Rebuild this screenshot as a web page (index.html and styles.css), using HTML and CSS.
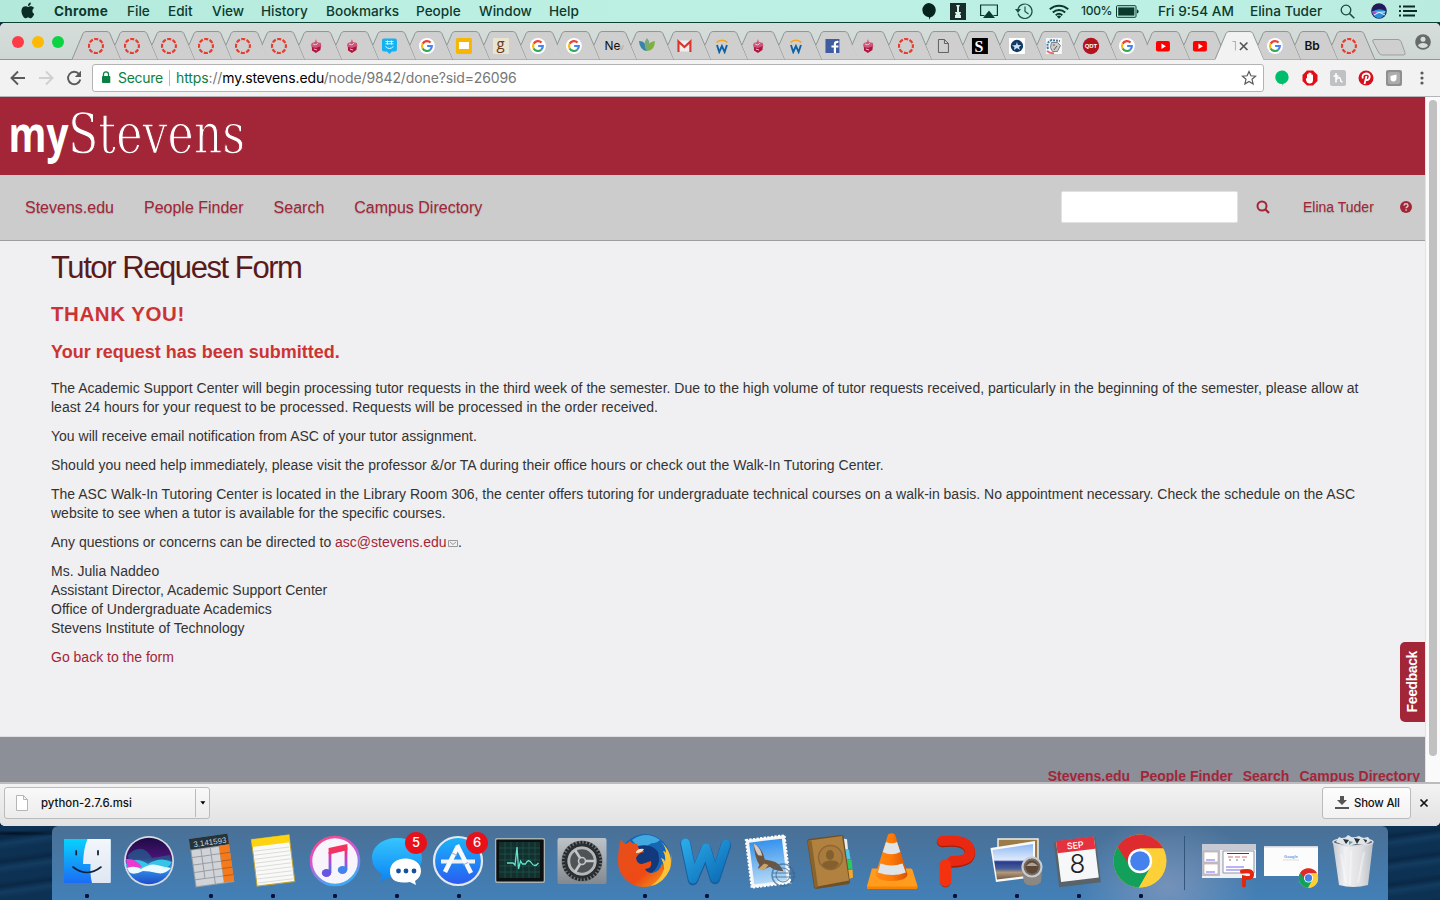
FILE: index.html
```html
<!DOCTYPE html>
<html lang="en">
<head>
<meta charset="utf-8">
<title>Tutor Request Form</title>
<link rel="stylesheet" href="styles.css">
</head>
<body>
<svg class="defs" width="0" height="0">
  <defs>
    <path id="tab" d="M6 14L11 2.5Q12 .5 14 .5H35Q37 .5 38 2.5L49 28.500H12Z" fill="#cfcfcf"/>
    <path id="tabline" d="M6 14L11 2.500Q12 .5 14 .5H35Q37 .5 38 2.500L49 28.500" fill="none" stroke="#8f9593"/>
    <symbol id="t" viewBox="0 0 49 29"><use href="#tab"/><use href="#tabline"/></symbol>
    <symbol id="canvas" viewBox="0 0 16 16"><circle cx="8" cy="8" r="7" fill="none" stroke="#e73c2e" stroke-width="2.200" stroke-dasharray="4.100 1.398" stroke-dashoffset="2"/></symbol>
    <symbol id="acorn" viewBox="0 0 16 16"><path d="M8 1l1 3 4 1 .5 3-4 2H4L3 7l1-2 3-1z" fill="#d0557a"/><path d="M4 9l4 1 5-2-.5 4L8 15l-4-2.500z" fill="#b01540"/><path d="M5 6l3 1 2-2M6 11l3 1" stroke="#eec3cf" fill="none"/></symbol>
    <symbol id="google" viewBox="0 0 16 16"><circle cx="8" cy="8" r="8" fill="#fff"/><g fill="none" stroke-width="2.200"><path d="M11.600 4.600A4.900 4.900 0 0 0 3.700 5.700" stroke="#ea4335"/><path d="M3.700 5.700a4.900 4.900 0 0 0 0 4.800" stroke="#fbbc05"/><path d="M3.700 10.500a4.900 4.900 0 0 0 7.600 1.200" stroke="#34a853"/><path d="M11.300 11.700A4.900 4.900 0 0 0 12.900 8H8.200" stroke="#4285f4"/></g></symbol>
    <symbol id="ww" viewBox="0 0 16 16"><path d="M2.500 4.500a6.500 5 0 0 1 11 0" fill="none" stroke="#f3a31c" stroke-width="1.500"/><path d="M3 7l2.300 7L8 8l2.700 6L13 7" fill="none" stroke="#0f62a5" stroke-width="1.900"/></symbol>
    <symbol id="yt" viewBox="0 0 16 16"><rect x="1" y="3" width="14" height="10.500" rx="2" fill="#f00"/><path d="M6.500 5.500v5.500L11 8.200z" fill="#fff"/></symbol>
    <symbol id="chrome" viewBox="0 0 54 54"><circle cx="27" cy="27" r="26.500" fill="#f9c92f"/><path d="M4.500 13A26.500 26.500 0 0 1 50.400 14.500H27L15 32z" fill="#de2b2f"/><path d="M4.500 13A26.500 26.500 0 0 0 26 53.500L37.500 34 17 32z" fill="#12a05a"/><path d="M50 14.500H27V27L37 34 26 53.500A26.500 26.500 0 0 0 50 14.500z" fill="#fcd036"/><circle cx="27" cy="27" r="12.200" fill="#fff"/><circle cx="27" cy="27" r="9.800" fill="#4581ee"/></symbol>
    <linearGradient id="finderL" x2="0" y2="1"><stop stop-color="#08d2fc"/><stop offset="1" stop-color="#1c6cf5"/></linearGradient>
    <linearGradient id="finderR" x2="0" y2="1"><stop stop-color="#f3f6fb"/><stop offset="1" stop-color="#dfe7f2"/></linearGradient>
    <linearGradient id="siri" x2="0" y2="1"><stop stop-color="#1d0b45"/><stop offset=".45" stop-color="#4b1478"/><stop offset=".6" stop-color="#3a9ae8"/><stop offset="1" stop-color="#1b4ecb"/></linearGradient>
    <linearGradient id="sky" x2="0" y2="1"><stop stop-color="#3190ee"/><stop offset="1" stop-color="#b9dcf5"/></linearGradient>
    <linearGradient id="store" x2="0" y2="1"><stop stop-color="#19b4f9"/><stop offset="1" stop-color="#2a5bf0"/></linearGradient>
    <linearGradient id="msg" x2="0" y2="1"><stop stop-color="#36c5fd"/><stop offset="1" stop-color="#0a83f5"/></linearGradient>
    <linearGradient id="tune" x2=".4" y2="1"><stop stop-color="#fb4a7a"/><stop offset=".5" stop-color="#d455d8"/><stop offset="1" stop-color="#3fa9f5"/></linearGradient>
    <linearGradient id="note" x2="0" y2="1"><stop stop-color="#f82f63"/><stop offset=".5" stop-color="#b249d8"/><stop offset="1" stop-color="#2f7df0"/></linearGradient>
    <linearGradient id="metal" x2="0" y2="1"><stop stop-color="#bcc4ca"/><stop offset="1" stop-color="#84898f"/></linearGradient>
    <linearGradient id="fox" x2="1" y2="1"><stop stop-color="#e5501c"/><stop offset=".6" stop-color="#ee4a15"/><stop offset="1" stop-color="#f9b01c"/></linearGradient>
    <linearGradient id="cone" x2="1" y2="0"><stop stop-color="#ff8a14"/><stop offset=".5" stop-color="#ff7a05"/><stop offset="1" stop-color="#d75203"/></linearGradient>
    <linearGradient id="word" x2="1" y2="1"><stop stop-color="#2aa7e6"/><stop offset="1" stop-color="#0c6bb5"/></linearGradient>
    <linearGradient id="trash" x2="1" y2="0"><stop stop-color="#c5c9cf"/><stop offset=".3" stop-color="#f1f1f3"/><stop offset=".7" stop-color="#dfdfe2"/><stop offset="1" stop-color="#b9bec5"/></linearGradient>
    <linearGradient id="sea" x2="0" y2="1"><stop stop-color="#8fb8f5"/><stop offset=".45" stop-color="#dfeafa"/><stop offset=".5" stop-color="#27398c"/><stop offset=".7" stop-color="#49619b"/><stop offset=".8" stop-color="#b49878"/><stop offset="1" stop-color="#705b48"/></linearGradient>
  </defs>
</svg>

<header class="menubar">
  <nav class="menus">
    <svg class="apple" viewBox="0 0 14 17"><path d="M9.800.5C8 .7 6.800 2.200 7 4 8.700 4 10 2.400 9.800.5zM13.200 6.100C12 4.500 9.800 4 8.300 4.600c-.9.400-1.500.4-2.400 0C4 3.900 2 4.500 1 6.400c-1.300 2.600-.2 6.500 1.700 8.800 1 1.200 1.900 1.200 3 .7.900-.4 1.900-.4 2.800 0 1.200.5 2 .3 3-.9.900-1.100 1.400-2.200 1.700-3.100-2.300-1-2.500-4.300 0-5.800z" fill="#0b2c24"/></svg>
    <b>Chrome</b><span>File</span><span>Edit</span><span>View</span><span>History</span><span>Bookmarks</span><span>People</span><span>Window</span><span>Help</span>
  </nav>
  <div class="status">
    <svg width="15" height="17" viewBox="0 0 15 17"><path d="M7.500 0a7.300 7.300 0 0 1 2 14.300L8 16.800v-2.500A7.200 7.200 0 0 1 7.500 0z" fill="#06231c"/></svg>
    <svg width="16" height="17" viewBox="0 0 16 17"><path d="M0 0h16v17H0z" fill="#182c2a"/><path d="M6 2h4l-1 2v5h2l-1 3h1v3H5v-3h1L5 9h2V4z" fill="#d6f2e9"/></svg>
    <svg width="18" height="15" viewBox="0 0 18 15"><path d="M4.500 11.500H.6V1h16.800v10.500h-3.900" fill="none" stroke="#0b3a2d" stroke-width="1.200"/><path d="M9 6.500l6 7.500H3z" fill="#0b3a2d"/></svg>
    <svg width="18" height="17" viewBox="0 0 18 17"><path d="M3 10.500a7.200 7.200 0 1 0 0-4.500M10 3.500v5l3.500 2.500" fill="none" stroke="#1b5144" stroke-width="1.200"/><path d="M0 6h6L3 10z" fill="#1b5144"/></svg>
    <svg width="20" height="15" viewBox="0 0 20 15"><g fill="none" stroke="#0b3a2d" stroke-width="1.900"><path d="M.8 5.300a13.500 13.500 0 0 1 18.400 0M3.800 8.500a9 9 0 0 1 12.400 0M6.700 11.300a5 5 0 0 1 6.600 0"/></g><path d="M10 14.800l2.200-2.400a3.300 3.300 0 0 0-4.400 0z" fill="#0b3a2d"/></svg>
    <span class="pct">100%</span>
    <svg width="23" height="13" viewBox="0 0 23 13"><rect x=".5" y=".7" width="19.500" height="11.600" rx="1" fill="none" stroke="#0b3a2d"/><path d="M2.200 2.400H18.400v8.200H2.200z" fill="#0b3a2d"/><path d="M21 4.500q1.600 0 1.600 2t-1.600 2z" fill="#0b3a2d"/></svg>
    <span class="clock">Fri 9:54 AM</span>
    <span class="user">Elina Tuder</span>
    <svg width="15" height="15" viewBox="0 0 15 15"><circle cx="6" cy="6" r="4.800" fill="none" stroke="#164b3e" stroke-width="1.300"/><path d="M9.500 9.500l4.800 4.800" stroke="#164b3e" stroke-width="1.600"/></svg>
    <svg width="16" height="16" viewBox="0 0 16 16"><circle cx="8" cy="8" r="7.800" fill="#231a5a"/><path d="M1 9q6-5 14-1-2 7-7 7.500Q2 14 1 9z" fill="#2890d8"/><path d="M2 9q6-1 12 3M3 12q5-4 11-3" stroke="#d8f5ff" fill="none"/><path d="M1 8l6 1-5 2z" fill="#b13fd8"/></svg>
    <svg width="18" height="12" viewBox="0 0 18 12"><path d="M4 1.500h12M4 6h14M4 10.500h12" stroke="#0b2c24" stroke-width="2"/><path d="M0 1.500h2M0 6h2M0 10.500h2" stroke="#0b2c24" stroke-width="2"/></svg>
  </div>
</header>

<main class="window">
  <div class="tabstrip">
    <div class="lights"><i class="red"></i><i class="yellow"></i><i class="green"></i></div>
    <div class="tabs">
      <svg viewBox="0 0 49 29"><path d="M0 28.500L11 2.500Q12 .5 14 .5H35Q37 .5 38 2.500L49 28.500" fill="#cfcfcf" stroke="#8f9593"/><use href="#canvas" x="16" y="7" width="16" height="16"/></svg>
      <svg viewBox="0 0 49 29"><use href="#t"/><use href="#canvas" x="15" y="7" width="16" height="16"/></svg>
      <svg viewBox="0 0 49 29"><use href="#t"/><use href="#canvas" x="15" y="7" width="16" height="16"/></svg>
      <svg viewBox="0 0 49 29"><use href="#t"/><use href="#canvas" x="15" y="7" width="16" height="16"/></svg>
      <svg viewBox="0 0 49 29"><use href="#t"/><use href="#canvas" x="15" y="7" width="16" height="16"/></svg>
      <svg viewBox="0 0 49 29"><use href="#t"/><use href="#canvas" x="15" y="7" width="16" height="16"/></svg>
      <svg viewBox="0 0 49 29"><use href="#t"/><use href="#acorn" x="15" y="7" width="16" height="16"/></svg>
      <svg viewBox="0 0 49 29"><use href="#t"/><use href="#acorn" x="14" y="7" width="16" height="16"/></svg>
      <svg viewBox="0 0 49 29"><use href="#t"/><path d="M17 7.500h11q2 0 2 2v9q0 2-2 2h-3L22.500 23 20 20.500h-3q-2 0-2-2v-9q0-2 2-2z" fill="#15b1f1"/><path d="M18.500 15.500q4 4 8 0M20.500 9.500v4M24.500 9.500v4M18.500 10.500h8M18.500 12.800h8" fill="none" stroke="#fff" stroke-width=".9"/></svg>
      <svg viewBox="0 0 49 29"><use href="#t"/><use href="#google" x="15" y="7" width="16" height="16"/></svg>
      <svg viewBox="0 0 49 29"><use href="#t"/><rect x="15" y="7" width="16" height="16" rx="1.500" fill="#f6b704"/><path d="M18 11h10v7H18z" fill="#fff"/></svg>
      <svg viewBox="0 0 49 29"><use href="#t"/><path d="M15 7h16v16H15z" fill="#eae5d0"/><text x="18.600" y="18.500" class="goodreads">g</text></svg>
      <svg viewBox="0 0 49 29"><use href="#t"/><use href="#google" x="15" y="7" width="16" height="16"/></svg>
      <svg viewBox="0 0 49 29"><use href="#t"/><use href="#google" x="15" y="7" width="16" height="16"/></svg>
      <svg viewBox="0 0 49 29"><use href="#t"/><text x="16.500" y="19" class="tabtext">Ne</text><text x="31" y="19" class="tabtext faded">v</text></svg>
      <svg viewBox="0 0 49 29"><use href="#t"/><path d="M14 10q8 0 8 10-7 0-8-10z" fill="#3684a8"/><path d="M22 7q5 5 0 13-5-7 0-13z" fill="#7ba87c"/><path d="M30 10q0 10-8 10 0-9 8-10z" fill="#7eb13d"/></svg>
      <svg viewBox="0 0 49 29"><use href="#t"/><path d="M15.500 9.500h14v11h-14z" fill="#eee"/><path d="M16.500 21V10.500l6 5.500 6-5.500V21" fill="none" stroke="#d7372c" stroke-width="2.200"/></svg>
      <svg viewBox="0 0 49 29"><use href="#t"/><use href="#ww" x="15" y="7" width="16" height="16"/></svg>
      <svg viewBox="0 0 49 29"><use href="#t"/><use href="#acorn" x="14" y="7" width="16" height="16"/></svg>
      <svg viewBox="0 0 49 29"><use href="#t"/><use href="#ww" x="15" y="7" width="16" height="16"/></svg>
      <svg viewBox="0 0 49 29"><use href="#t"/><path d="M15.500 8h14v14h-14z" fill="#3f5c9f"/><path d="M25 22v-9q0-2.500 3.500-2M21.500 15.500h7" fill="none" stroke="#fff" stroke-width="2.200"/></svg>
      <svg viewBox="0 0 49 29"><use href="#t"/><use href="#acorn" x="14" y="7" width="16" height="16"/></svg>
      <svg viewBox="0 0 49 29"><use href="#t"/><use href="#canvas" x="15" y="7" width="16" height="16"/></svg>
      <svg viewBox="0 0 49 29"><use href="#t"/><path d="M18.500 8.500h6l4 4v9h-10zM24.500 8.500v4h4" fill="none" stroke="#5f5f5f"/></svg>
      <svg viewBox="0 0 49 29"><use href="#t"/><path d="M15 7h16v16H15z" fill="#000"/><text x="17.500" y="20.800" class="slate">S</text></svg>
      <svg viewBox="0 0 49 29"><use href="#t"/><path d="M15 7h16v16H15z" fill="#fff"/><circle cx="23" cy="15" r="6.200" fill="#123a66"/><path d="M23 11l1 3h3.500L25 16l1 3-3-2-3 2 .5-3-2.500-1.500 4-.5z" fill="#cfe0f0"/></svg>
      <svg viewBox="0 0 49 29"><use href="#t"/><path d="M15 7h16v16H15z" fill="#f6f6f6"/><path d="M17 18q-2-7 4-9l8 1" stroke="#3a7fb0" fill="none" stroke-width="2" stroke-dasharray="2 1"/><path d="M20.500 11.500h6l3 3-3 6h-5l-2-4z" fill="#ccc" stroke="#666" stroke-width=".8"/><path d="M22 14h2M26 15l-3 4" stroke="#444" stroke-width=".8"/><path d="M16 20q4 3 7 2" stroke="#e86a6a" stroke-width="2" fill="none"/></svg>
      <svg viewBox="0 0 49 29"><use href="#t"/><circle cx="23" cy="15" r="8.200" fill="#b3131f"/><text x="23" y="17.500" class="qdt">QDT</text></svg>
      <svg viewBox="0 0 49 29"><use href="#t"/><use href="#google" x="14" y="7" width="16" height="16"/></svg>
      <svg viewBox="0 0 49 29"><use href="#t"/><use href="#yt" x="14" y="7" width="16" height="16"/></svg>
      <svg viewBox="0 0 49 29"><use href="#t"/><use href="#yt" x="14" y="7" width="16" height="16"/></svg>
      <svg viewBox="0 0 49 29"><path d="M0 29V28.500L11 2.500Q12 .5 14 .5H35Q37 .5 38 2.500L49 28.500V29" fill="#f2f2f2"/><path d="M0 28.500L11 2.500Q12 .5 14 .5H35Q37 .5 38 2.500L49 28.500" fill="none" stroke="#8f9593"/><path d="M17.500 10.500h3.500M20.500 10.500v9" stroke="#b9aea3" fill="none"/><path d="M25 11.500l7.500 7.500M32.500 11.500L25 19" stroke="#555" stroke-width="1.700"/></svg>
      <svg viewBox="0 0 49 29"><use href="#t"/><use href="#google" x="15" y="7" width="16" height="16"/></svg>
      <svg viewBox="0 0 49 29"><use href="#t"/><text x="15.500" y="19" class="tabtext bold">Bb</text></svg>
      <svg viewBox="0 0 49 29"><use href="#t"/><use href="#canvas" x="15" y="7" width="16" height="16"/></svg>
    </div>
    <svg class="newtab" width="34" height="17" viewBox="0 0 34 17"><path d="M2 .5h24q2 0 3 2l4 11q.8 2.500-1.500 2.500H10q-2 0-3-2L1 3Q.2.5 2 .5z" fill="#cfcfcf" stroke="#9a9f9d"/></svg>
    <svg class="person" width="16" height="16" viewBox="0 0 16 16"><circle cx="8" cy="8" r="7.800" fill="#666a69"/><circle cx="8" cy="5.300" r="2.500" fill="#d6dddb"/><path d="M3 11.800q1-2.800 5-2.800t5 2.800q-2 2.200-5 2.200t-5-2.200z" fill="#d6dddb"/></svg>
  </div>

  <div class="toolbar">
    <div class="navs">
      <svg width="16" height="16" viewBox="0 0 16 16"><path d="M15 8H2M8 1.500L1.500 8 8 14.500" fill="none" stroke="#5a5a5a" stroke-width="1.900"/></svg>
      <svg width="16" height="16" viewBox="0 0 16 16"><path d="M1 8h13M8 1.500L14.500 8 8 14.500" fill="none" stroke="#d0d0d0" stroke-width="1.900"/></svg>
      <svg width="16" height="16" viewBox="0 0 16 16"><path d="M13 4A6.200 6.200 0 1 0 14.300 9.500" fill="none" stroke="#5a5a5a" stroke-width="1.900"/><path d="M15 .8V7H8.800z" fill="#5a5a5a"/></svg>
    </div>
    <div class="omnibox">
      <svg width="10" height="13" viewBox="0 0 10 13"><path d="M2.500 5.500V3.300a2.500 2.500 0 0 1 5 0v2.200" fill="none" stroke="#0b8043" stroke-width="1.300"/><rect x="1" y="5" width="8.300" height="7" rx=".8" fill="#0b8043"/></svg>
      <span class="secure">Secure</span><i class="bar"></i>
      <span class="url"><em>https</em>://<strong>my.stevens.edu</strong>/node/9842/done?sid=26096</span>
      <svg class="star" width="16" height="16" viewBox="0 0 16 16"><path d="M8 1.500l1.900 4.300 4.700.4-3.600 3.100 1.100 4.600L8 11.400l-4.100 2.500L5 9.300 1.400 6.200l4.700-.4z" fill="none" stroke="#5a5a5a" stroke-width="1.200"/></svg>
    </div>
    <div class="exts">
      <svg width="16" height="16" viewBox="0 0 16 16"><path d="M7.500.5a6.700 6.700 0 0 1 2 13.200L8.500 16V14A6.700 6.700 0 0 1 7.500.5z" fill="#00bd6c"/></svg>
      <svg width="16" height="16" viewBox="0 0 16 16"><path d="M5 .5h6L15.500 5v6L11 15.500H5L.5 11V5z" fill="#e40d16"/><path d="M5 8V4.500q.8-1 1.400 0V3q.9-1 1.600 0 .9-.8 1.500.5V5q.8-1 1.500 0v5q0 3.500-3.300 3.500T3.800 9q.5-1 1.200-1z" fill="#fff"/></svg>
      <svg width="16" height="16" viewBox="0 0 16 16"><rect width="16" height="16" rx="2.500" fill="#bfc1c3"/><path d="M6 3v9.500M6 9.500q4-4 4.500 0 .2 3 2 2M3.500 6h5" fill="none" stroke="#fff" stroke-width="1.500"/></svg>
      <svg width="16" height="16" viewBox="0 0 16 16"><circle cx="8" cy="8" r="7.500" fill="#d5101c"/><path d="M4.800 8.500Q3.600 4 8 3.500q4 .2 3.700 3.500-.7 3.500-3.500 3L7 9.500M8.500 6l-2 8" fill="none" stroke="#fff" stroke-width="1.800"/></svg>
      <svg width="16" height="16" viewBox="0 0 16 16"><rect width="16" height="16" rx="2" fill="#8f8f8f"/><rect x="2" y="2" width="12" height="12" rx="2" fill="#acacac"/><path d="M4.500 6l6-1.500v4q-.5 3-3 3-3 0-3-3z" fill="#fff"/></svg>
      <svg width="16" height="16" viewBox="0 0 16 16"><g fill="#5a5a5a"><circle cx="8" cy="3" r="1.600"/><circle cx="8" cy="8" r="1.600"/><circle cx="8" cy="13" r="1.600"/></g></svg>
    </div>
  </div>

  <div class="viewport">
    <div class="page">
      <div class="banner">
        <svg width="260" height="78" viewBox="0 0 260 78"><text x="8.500" y="55" class="my" textLength="60" lengthAdjust="spacingAndGlyphs">my</text><text x="68" y="55.500" class="stevens" textLength="177" lengthAdjust="spacingAndGlyphs">Stevens</text></svg>
      </div>
      <nav class="sitenav">
        <a>Stevens.edu</a><a>People Finder</a><a>Search</a><a>Campus Directory</a>
        <div class="right">
          <input class="search" type="text" aria-label="Search">
          <svg width="14" height="14" viewBox="0 0 14 14"><circle cx="6" cy="6" r="4.500" fill="none" stroke="#a32638" stroke-width="2"/><path d="M9 9l4 4" stroke="#a32638" stroke-width="2.300"/></svg>
          <a class="me">Elina Tuder</a>
          <svg class="help" width="12" height="12" viewBox="0 0 12 12"><circle cx="6" cy="6" r="6" fill="#a32638"/><path d="M4 4.600Q4.200 2.800 6 2.800T8 4.500Q8 5.400 7 6 6.100 6.500 6.100 7.300M6.100 8.300v1.400" fill="none" stroke="#d9c4c8" stroke-width="1.500"/></svg>
        </div>
      </nav>
      <article class="content">
        <h1>Tutor Request Form</h1>
        <h2>THANK YOU!</h2>
        <h3>Your request has been submitted.</h3>
        <p>The Academic Support Center will begin processing tutor requests in the third week of the semester. Due to the high volume of tutor requests received, particularly in the beginning of the semester, please allow at<br>least 24 hours for your request to be processed. Requests will be processed in the order received.</p>
        <p>You will receive email notification from ASC of your tutor assignment.</p>
        <p>Should you need help immediately, please visit the professor &amp;/or TA during their office hours or check out the Walk-In Tutoring Center.</p>
        <p>The ASC Walk-In Tutoring Center is located in the Library Room 306, the center offers tutoring for undergraduate technical courses on a walk-in basis. No appointment necessary. Check the schedule on the ASC<br>website to see when a tutor is available for the specific courses.</p>
        <p>Any questions or concerns can be directed to <a>asc@stevens.edu<svg class="mail" width="10" height="7" viewBox="0 0 10 7"><path d="M.5.5h9v6h-9zM2 2l3 2.500L8 2" fill="none" stroke="#999"/></svg></a>.</p>
        <p>Ms. Julia Naddeo<br>Assistant Director, Academic Support Center<br>Office of Undergraduate Academics<br>Stevens Institute of Technology</p>
        <p><a>Go back to the form</a></p>
      </article>
      <footer class="sitefoot"><a>Stevens.edu</a><a>People Finder</a><a>Search</a><a>Campus Directory</a></footer>
      <div class="feedback"><span>Feedback</span></div>
    </div>
    <div class="scroll"><i></i></div>
  </div>

  <div class="shelf">
    <div class="download">
      <svg width="12" height="16" viewBox="0 0 12 16"><path d="M.5.5h7l4 4v11H.5zM7.500.5v4h4" fill="#fff" stroke="#b5b5b5"/></svg>
      <span>python-2.7.6.msi</span>
      <b><svg width="6" height="4" viewBox="0 0 6 4"><path d="M.3.300h5L3 3.500z" fill="#000"/></svg></b>
    </div>
    <div class="showall"><svg width="14" height="13" viewBox="0 0 14 13"><path d="M5 0h4v4h3L7 9 2 4h3z" fill="#555"/><path d="M0 12h14" stroke="#555" stroke-width="2"/></svg><span>Show All</span></div>
    <svg class="close" width="10" height="10" viewBox="0 0 10 10"><path d="M1.500 1.500l7 7M8.500 1.500l-7 7" stroke="#111" stroke-width="1.700"/></svg>
  </div>
</main>

<section class="desktop">
  <div class="dock">
    <svg class="run" viewBox="56 826 62 74"><path d="M64 839.500q0-.5.500-.5h46v44H64.500q-.5 0-.5-.5z" fill="url(#finderL)"/><path d="M87.500 839h22.500q.8 0 .8 1v42q0 1-.8 1H92q-2-7-1.500-19H83q.5-16 4.500-25z" fill="url(#finderR)"/><path d="M73 867q14 11 28 0" fill="none" stroke="#12223c" stroke-width="1.600" stroke-linecap="round"/><path d="M76.200 851v3.500M98 851v3.500" stroke="#12223c" stroke-width="1.800" stroke-linecap="round"/></svg>
    <svg viewBox="118 826 62 74"><circle cx="149" cy="861" r="25" fill="#d9dce3"/><circle cx="149" cy="861" r="23.300" fill="url(#siri)"/><path d="M128 855q14-14 24 3l18-3q2 8 0 12l-40 4z" fill="#1d6f96" opacity=".6"/><path d="M126 864q10-8 22 0 12-8 24-2-3 6-10 7-7-3-14 0t-20 0z" fill="#35c5e8"/><path d="M126 859q10-1 16 8l-14 3z" fill="#e93bd0"/><path d="M127 868q8-3 14 1 9-6 16-4t14 3q-6 7-14 5t-14-2q-10 5-14 1z" fill="#e9fbff"/></svg>
    <svg class="run" viewBox="180 826 62 74"><g transform="rotate(-8 211 860)"><path d="M192 836h39v49h-39z" fill="#9a9da2"/><path d="M192 836h39v11h-39z" fill="#24333c"/><text x="229" y="845" class="calc">3.141593</text><path d="M221 847h10v37h-10z" fill="#f47a1b"/><g fill="#d0d3d7"><path d="M193 848h9v6.500h-9zM203 848h8.500v6.500H203zM212.500 848h8v6.500h-8zM193 855.500h9v6.500h-9zM203 855.500h8.500v6.500H203zM212.500 855.500h8v6.500h-8zM193 863h9v6.500h-9zM203 863h8.500v6.500H203zM212.500 863h8v6.500h-8zM193 870.500h9v6.500h-9zM203 870.500h8.500v6.500H203zM212.500 870.500h8v6.500h-8zM193 878h18.500v6H193zM212.500 878h8v6h-8z"/></g><path d="M221 855h10M221 862.500h10M221 870h10M221 877.500h10" stroke="#a65b25" stroke-width=".8"/></g></svg>
    <svg class="run" viewBox="242 826 62 74"><g transform="rotate(-7 273 860)"><path d="M254 837h38v47h-38z" fill="#f9f9f7" stroke="#bda434" stroke-width="1"/><path d="M254 837h38v7.500h-38z" fill="#fdd40f"/><path d="M255 849h36M255 853h36M255 857h36M255 861h36M255 865h36M255 869h36M255 873h36M255 877h36M255 881h36" stroke="#dcdcdc"/></g></svg>
    <svg class="run" viewBox="304 826 62 74"><circle cx="335" cy="861" r="24" fill="#f7f5fb" stroke="url(#tune)" stroke-width="2.600"/><path d="M330 873v-20l16-4v21" fill="none" stroke="url(#note)" stroke-width="2.800"/><path d="M328.600 848l18.800-4v6l-18.800 4z" fill="#f5325f"/><ellipse cx="326.500" cy="873" rx="4.700" ry="4" fill="#6a55e0"/><ellipse cx="342.500" cy="870" rx="4.700" ry="4" fill="#4482ec"/></svg>
    <svg class="run" viewBox="366 826 62 74"><path d="M397 838c14 0 25 8 25 20s-11 20-25 20q-5 0-9-1-5 5-8 5 3-4 2-8-10-6-10-16c0-12 11-20 25-20z" fill="url(#msg)"/><path d="M405.500 858.500c9 0 15.500 5 15.500 12.500q0 6-6 10l1 4-6-3q-20 3-20-11c0-7.500 6.500-12.500 15.500-12.500z" fill="#fff"/><g fill="#14509c"><circle cx="398.500" cy="871" r="2.400"/><circle cx="406" cy="871" r="2.400"/><circle cx="414" cy="871" r="2.400"/></g><circle cx="416" cy="843" r="11" fill="#e91119"/><text x="416" y="847" class="badge">5</text></svg>
    <svg class="run" viewBox="428 826 62 74"><circle cx="458" cy="861" r="24" fill="url(#store)" stroke="#e5e9ef" stroke-width="2.200"/><path d="M441 861.500h34" stroke="#eef1f5" stroke-width="4"/><path d="M457 845l14 28M457 848l-12 24" stroke="#f8f9fb" stroke-width="4.500"/><path d="M452 853l5 2.500M463 865l5-2.500" stroke="#93a9c8"/><circle cx="477" cy="843" r="11" fill="#e91119"/><text x="477" y="847" class="badge">6</text></svg>
    <svg viewBox="490 826 62 74"><rect x="495" y="838" width="50" height="45" rx="2" fill="#a8b3b3"/><rect x="496.300" y="839.500" width="47.400" height="42" rx="1" fill="#0d1010"/><path d="M499 842h41v36h-41z" fill="#12302d"/><path d="M499 848h41M499 854h41M499 860h41M499 866h41M499 872h41M505 842v36M511 842v36M517 842v36M523 842v36M529 842v36M535 842v36" stroke="#23524d" stroke-width=".8"/><path d="M507 863h6l2 2 2-18 1.500 22 2-8 2 3h3q3-6 6-1t7 0" fill="none" stroke="#63e3cb" stroke-width="1.300"/></svg>
    <svg viewBox="552 826 62 74"><rect x="557.500" y="838" width="49" height="46" rx="2" fill="url(#metal)"/><circle cx="582" cy="861" r="20.500" fill="#6f7376"/><circle cx="582" cy="861" r="18.500" fill="none" stroke="#222527" stroke-width="3" stroke-dasharray="1.900 1.500"/><circle cx="582" cy="861" r="16" fill="none" stroke="#2b2e30" stroke-width="3"/><circle cx="582" cy="861" r="13.200" fill="#4f5356" stroke="#b4b8bb" stroke-width="2.800"/><path d="M582 861l13 0M582 861l-7-11M582 861l-7 11" stroke="#c3c6c9" stroke-width="2.600"/><circle cx="582" cy="861" r="3.500" fill="#55595c" stroke="#c3c6c9" stroke-width="1.600"/></svg>
    <svg class="run" viewBox="614 826 62 74"><circle cx="645" cy="859.500" r="25.500" fill="#1766b4"/><path d="M632 840q14-10 28 0-4 4-8 3-8 6-16 2z" fill="#3fa9e0"/><path d="M638 846q14-3 20 6 4 14-8 22l-18-6z" fill="#12397c"/><path d="M621 839q1 4 5 5l4-3q2 3 7 3l2 5q4 0 5 3-6 1-8 6 1 6 6 6l9-3q2 7-6 8 2 4 7 4 8-1 10-10 4 8 0 16 8-6 8-18l2-8q1 12-5 21c-5 8-13 13-23 13-14 0-26-11-26-26q0-12 3-22z" fill="url(#fox)"/><path d="M661 842q13 11 9 27-6 14-19 17 10-7 13-17 0-6-3-11 4 1 4 4 1-6-2-11 2 0 3 2 0-6-5-11z" fill="#fbc33a"/><path d="M636 852q2-4 8-3-2 4-8 4z" fill="#f7e3c0"/></svg>
    <svg class="run" viewBox="676 826 62 74"><g fill="none" stroke-linecap="round" stroke-linejoin="round"><path d="M685.500 844l7.500 36 13-31 9 30 11-34" stroke="#145e9e" stroke-width="10.500"/><path d="M685.500 843l7.500 36 13-31 9 30 11-34" stroke="url(#word)" stroke-width="9"/></g></svg>
    <svg viewBox="738 826 62 74"><g transform="rotate(-7 768 861)"><path d="M750 839h36v45h-36z" fill="url(#sky)" stroke="#f3f5f7" stroke-width="3"/><path d="M748.500 837.500h39v48h-39z" fill="none" stroke="#fff" stroke-width="2" stroke-dasharray="2.300 1.300"/><path d="M756 842q8 5 9 17l6 2q9 3 11 12-8-1-13-6l-6 2-6-2 2-3q-4-8-3-22z" fill="#6b5540"/><path d="M756 842q6 4 7 13l-4-1q-3-5-3-12z" fill="#d0cac2"/><path d="M757 868l7-5 4 2-5 5z" fill="#c9a36c"/></g><circle cx="783" cy="875" r="11" fill="none" stroke="#3f688e" stroke-width="1.500" opacity=".7"/><circle cx="783" cy="875" r="7" fill="none" stroke="#3f688e" opacity=".8"/><path d="M773 873h23M773 877h23" stroke="#3f688e" stroke-width=".8"/></svg>
    <svg viewBox="800 826 62 74"><path d="M843 838.500l4 .8 1 10-4 .7z" fill="#e8eeee"/><path d="M845 850l4-.5 1.500 9.500-4 .5z" fill="#52c4e8"/><path d="M846.500 860l5-.5 1 9-5 .5z" fill="#2fc95b"/><path d="M847 870l5.500-.5.5 8-5 2z" fill="#f5a829"/><path d="M807 840.500l1.500-1.500 32-4 3 .8L850 882l-1 2-33 5-2-1z" fill="#6f4f25"/><path d="M809 840.500l33-4.500 7 44.500-34 6.500z" fill="#b0813f"/><path d="M807.500 840.500l4 0 6.500 46.500-3 1z" fill="#8a642e"/><circle cx="830.500" cy="857.500" r="12" fill="#a97b3c" stroke="#8d6735" stroke-width="1.300"/><ellipse cx="830" cy="855" rx="4" ry="5" fill="#83602e"/><path d="M822 865q1-4 8-4.500t9 3q-3 5.500-8.500 5.500t-8.500-4z" fill="#83602e"/></svg>
    <svg viewBox="862 826 62 74"><path d="M872 868.500h39q1 0 1.500 1.500l5 16q.5 2-1 2H868q-1.500 0-1-2l4.500-16q0-1.500.5-1.500z" fill="#ff9b1d"/><path d="M867 886.500h50v2.500h-50z" fill="#f78306"/><path d="M888 834.500q4-2.500 7 0l12.500 40q-1 6-15.500 6.500-15 0-16.500-6.500z" fill="url(#cone)"/><path d="M886 842q6 2.500 11 0l3.300 10q-9 4.500-17.500 0zM880.500 863.500q11 4 22 0l3.300 9q-13 5-28 0z" fill="#dfe4e8"/></svg>
    <svg class="run" viewBox="924 826 62 74"><g fill="none" stroke-linecap="round" stroke-linejoin="round"><path d="M942 842q27-3 28 11 0 9-18 9.500M945.500 866v16" stroke="#a51e0c" stroke-width="10.500"/><path d="M942 841q27-3 28 11 0 9-18 9" stroke="#e82811" stroke-width="10"/><path d="M945.500 865v16" stroke="#f4320f" stroke-width="11.500"/></g></svg>
    <svg class="run" viewBox="986 826 62 74"><path d="M998 839h40v28h-40z" fill="#9b7b48" stroke="#f4efe4" stroke-width="1.500"/><path d="M990.500 848l44.500-7v36l-39 5z" fill="#f9f9f9"/><path d="M992.500 850l40.500-6v31l-36 4.500z" fill="url(#sea)"/><path d="M1022 870q9 8 20 0l-1 12q-3 3.500-9 3.500t-8-3.500z" fill="#8b8782"/><circle cx="1032" cy="867" r="9.500" fill="#77695d" stroke="#c8ccd0" stroke-width="2.200"/><circle cx="1032" cy="867" r="6.500" fill="#5c4838"/><path d="M1026 866q6-7 12 0z" fill="#b2a28f"/></svg>
    <svg class="run" viewBox="1048 826 62 74"><g transform="rotate(-7 1077 860)"><path d="M1056 840h42v45h-42z" fill="#59636a"/><path d="M1058.500 839h38v41h-38z" fill="#f6f7f8"/><path d="M1058.500 838.500h38v12.500h-38z" fill="#e5323e"/><text x="1077" y="848.500" class="sep">SEP</text></g><text x="1077.500" y="873" class="day">8</text></svg>
    <svg class="run" viewBox="1110 826 62 74"><use href="#chrome" x="1113" y="834" width="54" height="54"/></svg>
    <i class="divider"></i>
    <svg viewBox="1198 826 62 74"><path d="M1202 844h54v34h-54z" fill="#f1f1f5"/><path d="M1202 844h54v6h-54z" fill="#c7c9d3"/><path d="M1202 850h18v26h-18z" fill="#b8c0ce"/><path d="M1204 852h14v10h-14zM1204 864h14v10h-14z" fill="#fff" stroke="#c9a79b" stroke-width=".7"/><path d="M1223 851h31v22h-31z" fill="#fff" stroke="#8b95a8"/><path d="M1227 853.500h22" stroke="#444" stroke-width="1"/><path d="M1228 857h21" stroke="#dd6b70" stroke-dasharray="5 2"/><path d="M1229 860h20" stroke="#777" stroke-dasharray="2 5"/><path d="M1226 867h18M1226 870h20M1206 860h9M1206 872h9" stroke="#a59af3" stroke-width="1.500"/><path d="M1242 871.500q10-2 10 3t-8 3v8" fill="none" stroke="#e5260f" stroke-width="4" stroke-linecap="round"/></svg>
    <svg viewBox="1260 826 62 74"><path d="M1264 846h54v30h-54z" fill="#fcfcfc"/><path d="M1264 846h54v1.500h-54z" fill="#cfd6dd"/><text x="1291" y="857.500" class="mini">Google</text><path d="M1283 860h16" stroke="#ddd"/><use href="#chrome" x="1298.500" y="868" width="20" height="20"/></svg>
    <svg viewBox="1322 826 62 74"><path d="M1333 843q20 6 40 0l-5 42q-15 4-29 0z" fill="url(#trash)"/><ellipse cx="1353" cy="842" rx="20" ry="4" fill="#5d646b" stroke="#d9dde2" stroke-width="1.500"/><path d="M1336 842l3-5 5 2 4-4 5 3 6-2 4 2 5-1 3 4-6 4-9-1-8 2-7-2z" fill="#dfe4e9"/><path d="M1343 839l6 1-3 4zM1354 838l6 1-3 5zM1363 839l4 1-1 3z" fill="#263038"/><path d="M1349 841l4 1-4 3z" fill="#4fa4aa"/><path d="M1341 854l5 29M1351 851l-1 34M1364 852l-6 31" stroke="#fff" stroke-width="2" opacity=".4"/></svg>
  </div>
</section>
</body>
</html>
```
FILE: styles.css
```css
* { box-sizing: border-box; }
body {
  margin: 0; width: 1440px; height: 900px; overflow: hidden;
  display: flex; flex-direction: column;
  font-family: "Liberation Sans", Arial, sans-serif;
  background: #0b2a45;
}
svg { display: block; flex: none; }
.defs { position: absolute; }

/* system menu bar */
.menubar {
  height: 23px; flex: none; display: flex; justify-content: space-between;
  background: linear-gradient(90deg, #b3e9da, #baefe2 30%, #bdf0e4 80%, #b9ecdf);
  border-bottom: 1px solid #0c4034;
  font: 500 13.6px/22px Inter, sans-serif; color: #0d3a2e; white-space: nowrap;
}
.menus { display: grid; grid-template-columns: 33px 73px 41px 44px 49px 65px 90px 63px 70px 40px; padding-left: 21px; }
.apple { width: 14px; height: 17px; margin-top: 2px; }
.menus b { font-weight: 700; letter-spacing: .25px; }
.status { display: grid; grid-template-columns: 29px 30px 35px 34px 32px 35px 42px 92px 90px 31px 28px 41px; align-items: center; height: 22px; }
.pct { font-size: 12px; letter-spacing: -.3px; }

/* browser window */
.window { height: 803px; flex: none; display: flex; flex-direction: column; border-radius: 5px; overflow: hidden; background: #f2f2f2; }
.tabstrip { height: 37px; flex: none; display: flex; background: linear-gradient(#d6dedb, #cfd7d4); border-bottom: 1px solid #8f9593; padding-top: 8px; }
.lights { width: 72px; padding: 5px 0 0 12px; display: flex; gap: 8px; }
.lights i { width: 12px; height: 12px; border-radius: 50%; }
.red { background: #fc3b46; }
.yellow { background: #fdb903; }
.green { background: #0bd342; }
.tabs { display: flex; height: 29px; }
.tabs > svg { width: 48.880px; height: 29px; margin-right: -12px; }
.tabtext { font: 400 12px Inter, sans-serif; fill: #111; }
.faded { fill: #aaa; font-size: 9px; }
.bold { font-weight: 600; }
.goodreads { font: 15px "Open Sans", sans-serif; fill: #6b3a1b; }
.slate { font: bold 16px "Liberation Serif", serif; fill: #fff; }
.qdt { font: bold 6px "Liberation Sans", sans-serif; fill: #fff; text-anchor: middle; }
.newtab { margin: 8px 0 0 9px; }
.person { margin: 3px 0 0 9px; }

.toolbar { height: 37px; flex: none; display: flex; align-items: center; background: #f2f2f2; border-bottom: 1px solid #b5b5b7; }
.navs { display: flex; gap: 12px; padding-left: 10px; width: 92px; }
.omnibox {
  width: 1172px; height: 28px; border: 1px solid #b3b3b3; border-radius: 3px; background: #fff;
  display: flex; align-items: center; padding-left: 8px; padding-bottom: 1px; font: 14px Inter, sans-serif; color: #777;
}
.secure { width: 44px; margin-left: 7px; color: #0b8043; letter-spacing: -.3px; }
.bar { width: 1px; height: 16px; background: #bbb; margin: 0 6px 0 7px; }
.url { white-space: nowrap; letter-spacing: -.12px; }
.url em { font-style: normal; color: #0b8043; }
.url strong { font-weight: 400; color: #000; }
.star { margin: 0 6px 0 auto; }
.exts { display: flex; gap: 12px; padding-left: 10px; }

/* page */
.viewport { height: 685px; flex: none; display: flex; }
.page { width: 1425px; position: relative; background: #f0eff1; display: flex; flex-direction: column; overflow: hidden; }
.banner { height: 78px; flex: none; background: #a32638; }
.my { font: 700 48px "Open Sans", sans-serif; fill: #fff; }
.stevens { font: 56px "DejaVu Serif", serif; fill: #fff; stroke: #a32638; stroke-width: 1.300px; }
.sitenav { height: 66px; flex: none; display: flex; align-items: center; gap: 30px; padding-left: 25px; background: #ccc; border-bottom: 1px solid #9d9d9f; font-size: 16px; text-shadow: 0 1px 1px rgba(0,0,0,.2); }
.page a { color: #a32638; }
.right { display: flex; align-items: center; margin-left: auto; margin-top: -1px; font-size: 14px; }
.search { width: 177px; height: 32px; border: 1px solid #e2e2e2; border-radius: 2px; background: #fff; margin-right: 18px; }
.me { margin: 0 26px 0 33px; width: 71px; white-space: nowrap; }
.help { margin-right: 13px; }
.content { flex: none; height: 496px; padding-left: 51px; border-bottom: 1px solid #dedee0; font-size: 14px; line-height: 19px; color: #333; white-space: nowrap; }
h1, h2, h3, p { margin: 0; }
h1 { font-size: 31px; font-weight: 400; line-height: 54px; letter-spacing: -1.430px; color: #591a1c; }
h2 { font-size: 20.500px; line-height: 38px; letter-spacing: .55px; color: #cc3434; }
h3 { font-size: 18px; line-height: 38px; color: #cc3434; margin-bottom: 8px; }
p { margin-bottom: 10px; }
.mail { display: inline-block; margin-left: 1.500px; vertical-align: 0; }
.sitefoot { height: 45px; flex: none; overflow: hidden; display: flex; justify-content: flex-end; gap: 10px; padding: 30px 5px 0 0; background: #8c8e98; font: bold 14px/19px "Liberation Sans", sans-serif; }
.feedback { position: absolute; right: 0; top: 545px; width: 25px; height: 80px; border-radius: 5px 0 0 5px; background: #a32638; color: #fff; font: bold 14px/25px "Liberation Sans", sans-serif; letter-spacing: -.4px; display: flex; align-items: center; justify-content: center; }
.feedback span { writing-mode: vertical-rl; transform: rotate(180deg); }
.scroll { width: 15px; background: #fafafa; border-left: 1px solid #e4e4e4; padding: 3px 0 0 3px; }
.scroll i { display: block; width: 8px; height: 656px; border-radius: 4px; background: #c1c1c1; }

.shelf { height: 44px; flex: none; display: flex; align-items: center; padding: 0 11px 5px 4px; background: linear-gradient(#f3f3f3, #e2e2e2); border-top: 2px solid #bcbcbe; font: 500 11.400px Inter, sans-serif; color: #111; }
.download { width: 206px; height: 32px; border: 1px solid #bbb; border-radius: 3px; background: linear-gradient(#f9f9f9, #ececec); display: flex; align-items: center; padding-left: 11px; }
.download span { margin-left: 13px; flex: 1; }
.download b { width: 14px; height: 28px; border-left: 1px solid #bbb; display: flex; align-items: center; justify-content: center; }
.showall { width: 89px; height: 32px; margin-left: auto; border: 1px solid #bbb; border-radius: 3px; background: linear-gradient(#fdfdfd, #f2f2f2); display: flex; align-items: center; padding-left: 12px; white-space: nowrap; letter-spacing: -.2px; }
.showall span { margin-left: 5px; }
.close { margin-left: 8px; }

/* dock */
.desktop { height: 74px; flex: none; display: flex; justify-content: center; background: radial-gradient(ellipse at 1% 10%, #031326, transparent 3%), repeating-linear-gradient(172deg, #0d3152 0 7px, #0a2846 12px, #123c60 18px, #0d3152 24px); }
.dock { width: 1336px; height: 74px; display: flex; padding-left: 4px; border-radius: 6px 6px 0 0; background: radial-gradient(ellipse 90px 70px at 1115px 60px, rgba(150,160,190,.6), transparent), linear-gradient(#4a7095, #4280b8); }
.dock > svg { width: 62px; height: 74px; }
.run { background: radial-gradient(circle 2.300px at 31px 70px, #06113a 2px, transparent 2.300px); }
.divider { width: 1px; height: 54px; margin: 10px 13px 0 12px; background: #31577c; }
.calc { font: 8px "Liberation Sans", sans-serif; fill: #c7d2d6; text-anchor: end; }
.badge { font: 500 13px Inter, sans-serif; fill: #fff; text-anchor: middle; }
.sep { font: 500 9px Inter, sans-serif; fill: #fff; text-anchor: middle; }
.day { font: 300 26px Inter, sans-serif; fill: #222; text-anchor: middle; }
.mini { font: bold 4px "Liberation Sans", sans-serif; fill: #6a9be8; text-anchor: middle; }
```
